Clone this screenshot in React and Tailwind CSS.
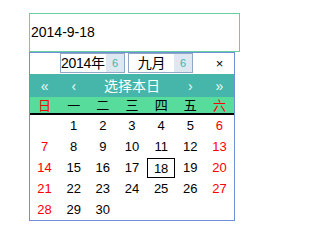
import React from "react";

const font = { fontFamily: '"Liberation Sans", "Noto Sans CJK SC", sans-serif' };

const weekdays = ["日", "一", "二", "三", "四", "五", "六"];

// September 2014 starts on Monday
const days = [null, ...Array.from({ length: 30 }, (_, i) => i + 1)];

const Select = ({ label, center }) => (
  <div className="flex h-[20px] w-[65px] border border-[#8fa8c8] bg-white">
    <div
      className={`flex min-w-0 flex-1 items-center whitespace-nowrap text-[14px] leading-none tracking-[-0.3px] text-black ${
        center ? "justify-center" : "pl-0"
      }`}>
      {label}
    </div>
    <div className="flex w-[18px] shrink-0 items-center justify-center bg-[#dfe7f1] text-[11px] leading-none text-[#3db8a4]">
      6
    </div>
  </div>
);

const App = () => {
  return (
    <div className="h-[237px] w-[268px] bg-white pl-[29px] pt-[13px]" style={font}>
      <div className="flex h-[39px] w-[211px] items-center border border-[#66d0a0] pl-px text-[14px] text-black">
        2014-9-18
      </div>

      <div className="w-[206px] border border-[#6f8fd6]">
        <div className="flex h-[21px] items-start pl-[30px]">
          <Select label="2014年" />
          <div className="ml-[3px]">
            <Select label="九月" center />
          </div>
          <div className="ml-auto flex h-[20px] w-[29px] items-center justify-center text-[13px] leading-none text-black">
            ×
          </div>
        </div>

        <div className="grid h-[23px] grid-cols-7 items-center bg-[#45b6a9] text-center text-[#eefaf7]">
          <span className="text-[14px] leading-none">«</span>
          <span className="text-[14px] leading-none">‹</span>
          <span className="col-span-3 text-[14px] leading-none text-white">选择本日</span>
          <span className="text-[14px] leading-none">›</span>
          <span className="text-[14px] leading-none">»</span>
        </div>

        <div className="grid h-[18px] grid-cols-7 items-center border-b-2 border-black bg-[#58dc9c] text-center text-[13px] leading-none">
          {weekdays.map((d, i) => (
            <span key={d} className={i === 0 || i === 6 ? "text-[#ff0000]" : "text-black"}>
              {d}
            </span>
          ))}
        </div>

        <div className="grid grid-cols-7 text-[13px]">
          {Array.from({ length: 35 }, (_, i) => {
            const d = days[i];
            const col = i % 7;
            const red = col === 0 || col === 6;
            return (
              <div key={i} className="flex h-[21px] items-center justify-center">
                {d && (
                  <span
                    className={`flex h-[20px] w-[28px] items-center justify-center leading-none ${
                      d === 18 ? "mt-px border border-black" : ""
                    } ${red ? "text-[#ff0000]" : "text-black"}`}>
                    {d}
                  </span>
                )}
              </div>
            );
          })}
        </div>
      </div>
    </div>
  );
};

export default App;
